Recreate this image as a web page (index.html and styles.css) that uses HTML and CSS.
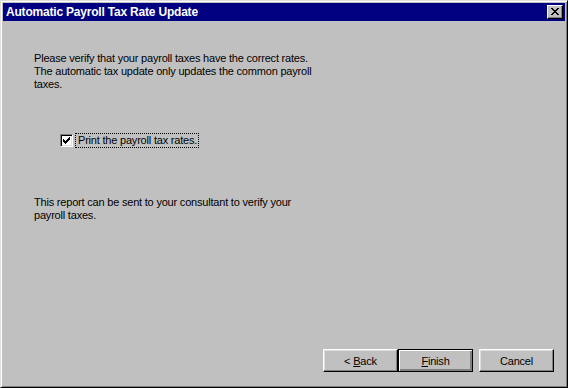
FILE: index.html
```html
<!DOCTYPE html>
<html lang="en">
<head>
    <meta charset="UTF-8">
    <title>Automatic Payroll Tax Rate Update</title>
    <link rel="stylesheet" href="styles.css">
</head>
<body>
    <div class="window">
        <div class="titlebar">
            <span class="title">Automatic Payroll Tax Rate Update</span>
            <span class="close">
                <svg width="8" height="7" viewBox="0 0 8 7"><path d="M0 0h2v1h1v1h2v-1h1v-1h2v1h-1v1h-1v1h-1v1h1v1h1v1h1v1h-2v-1h-1v-1h-2v1h-1v1h-2v-1h1v-1h1v-1h1v-1h-1v-1h-1v-1h-1z" fill="#000"/></svg>
            </span>
        </div>
        <div class="content">
            <p class="text first">Please verify that your payroll taxes have the correct rates.<br>The automatic tax update only updates the common payroll<br>taxes.</p>

            <label class="check-row">
                <span class="checkbox">
                    <svg width="7" height="7" viewBox="0 0 7 7"><path d="M6 0h1v3h-1v1h-1v1h-1v1h-1v1h-1v-1h-1v-1h-1v-3h1v1h1v1h1v-1h1v-1h1v-1h1z" fill="#000"/></svg>
                </span>
                <span class="check-label">Print the payroll tax rates.</span>
            </label>

            <p class="text second">This report can be sent to your consultant to verify your<br>payroll taxes.</p>

            <div class="buttons">
                <button class="btn">&lt; <u>B</u>ack</button>
                <button class="btn default"><u>F</u>inish</button>
                <button class="btn cancel">Cancel</button>
            </div>
        </div>
    </div>
</body>
</html>
```

FILE: styles.css
```css
html, body { margin: 0; padding: 0; background: #c0c0c0; }
body { font-family: "Liberation Sans", Arial, sans-serif; font-size: 11px; color: #000; letter-spacing: -0.2px; }

.window { width: 568px; height: 388px; box-sizing: border-box; background: #c0c0c0; border: 1px solid; border-color: #dfdfdf #000 #000 #dfdfdf; box-shadow: inset 1px 1px #fff, inset -1px -1px #808080; padding: 2px; display: flex; flex-direction: column; }

.titlebar { height: 18px; background: #000080; color: #fff; display: flex; align-items: center; justify-content: space-between; padding: 0 2px 0 3px; flex-shrink: 0; }
.title { font-weight: bold; font-size: 12px; letter-spacing: -0.2px; }
.close { width: 16px; height: 14px; box-sizing: border-box; background: #c0c0c0; border: 1px solid; border-color: #fff #000 #000 #fff; box-shadow: inset -1px -1px #808080; display: flex; align-items: center; justify-content: center; padding: 0 1px 1px 0; }
.close svg { display: block; }

.content { flex: 1; display: flex; flex-direction: column; padding: 0 11px 13px 31px; }

.text { margin: 0; line-height: 13px; white-space: nowrap; }
.first { margin-top: 31px; }
.second { margin-top: 48px; }

.check-row { display: flex; align-items: center; margin: 42px 0 0 26px; height: 15px; }
.checkbox { width: 13px; height: 13px; box-sizing: border-box; background: #fff; border: 1px solid; border-color: #808080 #fff #fff #808080; box-shadow: inset 1px 1px #000, inset -1px -1px #dfdfdf; display: flex; align-items: center; justify-content: center; }
.checkbox svg { display: block; }
.check-label { margin-left: 2px; padding: 0 1px 0 2px; border: 1px dotted #000; line-height: 13px; }

.buttons { margin-top: auto; display: flex; justify-content: flex-end; align-items: center; }
.btn { width: 75px; height: 23px; box-sizing: border-box; margin: 0; padding: 0; font: inherit; letter-spacing: inherit; color: #000; background: #c0c0c0; border: 1px solid; border-color: #fff #000 #000 #fff; box-shadow: inset -1px -1px #808080, inset 1px 1px #dfdfdf; }
.btn.default { border: 1px solid #000; box-shadow: inset 1px 1px #fff, inset -1px -1px #808080, inset -2px -2px #808080; }
.btn.cancel { margin-left: 6px; }
```
